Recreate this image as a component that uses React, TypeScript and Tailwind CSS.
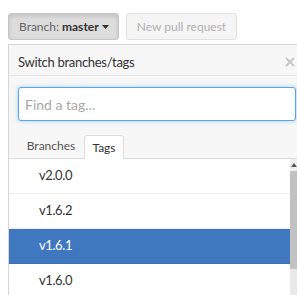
import React from "react";

const tags = ["v2.0.0", "v1.6.2", "v1.6.1", "v1.6.0"];

export default function App() {
  return (
    <div
      className="relative w-[297px] h-[295px] overflow-hidden bg-white text-[#333]"
      style={{ fontFamily: 'Lato, "Noto Sans", sans-serif' }}
    >
      <div className="flex gap-[7px] pl-2 pt-[13px]">
        <div className="flex h-[27px] w-[111px] items-center rounded-[3px] border border-[#c5c5c5] bg-[#dcdcdc] pl-[10px] text-[12px] shadow-[inset_0_2px_4px_rgba(0,0,0,0.12)]">
          <span className="text-[#666]">Branch:</span>
          <span className="ml-[3px] font-bold text-[#333]">master</span>
          <svg width="7" height="4" viewBox="0 0 7 4" className="ml-[3px]">
            <path d="M0 0h7L3.5 4z" fill="#333" />
          </svg>
        </div>
        <div className="flex h-[27px] w-[111px] items-center justify-center rounded-[3px] border border-[#e0e0e0] bg-[#f5f5f5] text-[12px] text-[#b0b0b0]">
          New pull request
        </div>
      </div>

      <div className="ml-2 mt-[4px] w-[300px] border-l border-t border-[#d5d5d5] bg-[#f7f7f7]">
        <div className="relative flex h-[31px] items-center border-b border-[#e5e5e5] pl-[9px] pt-[6px] text-[13px] tracking-[-0.3px] text-[#333]">
          Switch branches/tags
          <svg width="10" height="10" viewBox="0 0 10 10" className="absolute left-[276px] top-[12px]">
            <path d="M1 1L9 9M9 1L1 9" stroke="#c8c8c8" strokeWidth="2" />
          </svg>
        </div>
        <div className="pl-[9px] pt-[11px]">
          <div className="flex h-[34px] w-[278px] items-center rounded-[3px] border border-[#51a7e8] bg-white pl-[6px] text-[14px] text-[#a8a8a8] shadow-[0_0_4px_rgba(81,167,232,0.5)]">
            Find a tag...
          </div>
        </div>
        <div className="mt-[13px] flex h-[25px] items-end border-b border-[#dddddd] pl-[9px] text-[12px]">
          <div className="flex h-[24px] w-[66px] items-center justify-center text-[#555]">Branches</div>
          <div className="-mb-px flex h-[24px] w-[40px] items-center justify-center rounded-t-[3px] border border-b-0 border-[#dddddd] bg-white text-[#333]">
            Tags
          </div>
        </div>
        <div className="flex bg-white">
          <div className="w-[281px]">
            {tags.map((t) => (
              <div
                key={t}
                className={
                  t === "v1.6.1"
                    ? "flex h-[35px] items-center border-b border-[#3c6fb3] bg-[#4078c0] pl-[30px] text-[13px] tracking-[-0.4px] text-white"
                    : "flex h-[35px] items-center border-b border-[#eeeeee] pl-[30px] text-[13px] tracking-[-0.4px] text-[#333]"
                }
              >
                {t}
              </div>
            ))}
          </div>
          <div className="flex w-[8px] flex-col bg-[#e8e8e8]">
            <div className="flex h-[12px] items-center justify-center bg-[#f0f0f0]">
              <svg width="6" height="4" viewBox="0 0 6 4">
                <path d="M0 4L3 0L6 4z" fill="#555" />
              </svg>
            </div>
            <div className="h-[98px] bg-[#c2c2c2]" />
          </div>
        </div>
      </div>
    </div>
  );
}
